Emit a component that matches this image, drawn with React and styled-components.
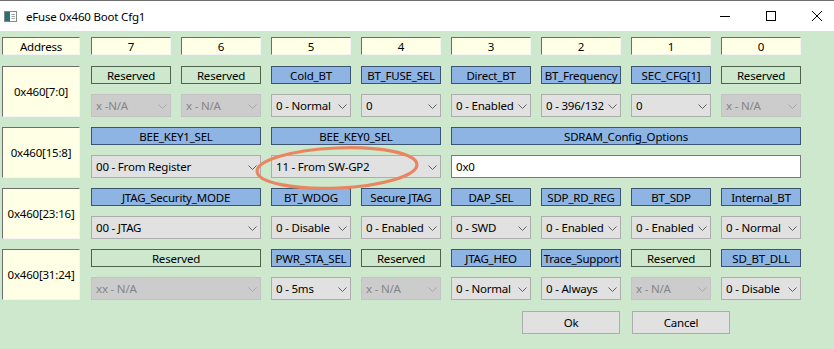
import React from 'react';
import styled, { createGlobalStyle } from 'styled-components';

const GlobalStyle = createGlobalStyle`
  html, body { margin: 0; padding: 0; }
  body {
    background: #cde8cc;
    font-family: "Noto Sans", "Segoe UI", sans-serif;
    font-size: 11.5px;
    letter-spacing: -0.2px;
    color: #000;
  }
`;

const Window = styled.div`
  position: relative;
  width: 834px;
  height: 349px;
  overflow: hidden;
  background: #cde8cc;
  display: flex;
  flex-direction: column;
`;

const TitleBar = styled.div`
  height: 30px;
  flex: none;
  background: #fff;
  border-top: 1px solid #6f6f6f;
  display: flex;
  align-items: center;
  padding-left: 4px;
`;

const AppIcon = styled.svg`
  width: 13px;
  height: 11px;
  flex: none;
  margin-right: 9px;
`;

const Title = styled.span`
  font-size: 11.5px;
  color: #000;
`;

const Controls = styled.div`
  margin-left: auto;
  margin-right: -6px;
  display: flex;
  height: 100%;
`;

const CaptionButton = styled.div`
  width: 46px;
  height: 100%;
  display: flex;
  align-items: center;
  justify-content: center;
`;

const Body = styled.div`
  padding: 6px 0 0 2px;
  display: flex;
  flex-direction: column;
`;

const Grid = styled.div`
  display: grid;
  grid-template-columns: 79px repeat(8, 80px);
  grid-template-rows: 19px repeat(4, 18px 23px);
  column-gap: 10px;
  row-gap: 10px;
`;

const Sunken = styled.div`
  grid-row: ${p => p.$row} / span ${p => p.$rspan || 1};
  grid-column: ${p => p.$col};
  box-sizing: border-box;
  width: ${p => (p.$col === 1 ? '78px' : 'auto')};
  height: ${p => (p.$rspan ? 'auto' : '18px')};
  background: #ffffe6;
  border-top: 1px solid #6d6d6d;
  border-left: 1px solid #6d6d6d;
  border-right: 1px solid #f4f4f4;
  border-bottom: 1px solid #f4f4f4;
  display: flex;
  align-items: center;
  justify-content: center;
  white-space: nowrap;
`;

const FieldLabel = styled.div`
  grid-row: ${p => p.$row};
  grid-column: ${p => p.$col} / span ${p => p.$span};
  box-sizing: border-box;
  height: 18px;
  border: 1px solid ${p => (p.$reserved ? '#4e624e' : '#3b5471')};
  background: ${p => (p.$reserved ? 'transparent' : '#8db4e2')};
  display: flex;
  align-items: center;
  justify-content: center;
  overflow: hidden;
  white-space: nowrap;
`;

const Select = styled.div`
  grid-row: ${p => p.$row};
  grid-column: ${p => p.$col} / span ${p => p.$span};
  box-sizing: border-box;
  height: 23px;
  border: 1px solid ${p => (p.$disabled ? '#c3c3c3' : '#adadad')};
  background: ${p => (p.$disabled ? '#cccccc' : '#e1e1e1')};
  color: ${p => (p.$disabled ? '#858585' : '#000')};
  display: flex;
  align-items: center;
  padding: 0 3px 0 4px;
  gap: 4px;
`;

const SelectText = styled.span`
  flex: 1;
  overflow: hidden;
  white-space: nowrap;
`;

const Chevron = styled.svg`
  width: 9px;
  height: 5px;
  flex: none;
  margin-top: 1px;
`;

const TextInput = styled.div`
  grid-row: ${p => p.$row};
  grid-column: ${p => p.$col} / span ${p => p.$span};
  box-sizing: border-box;
  height: 23px;
  border: 1px solid #7a7a7a;
  background: #fff;
  display: flex;
  align-items: center;
  padding: 0 4px;
`;

const ButtonRow = styled.div`
  display: flex;
  justify-content: flex-end;
  gap: 12px;
  margin-top: 11px;
  padding-right: 104px;
`;

const Button = styled.div`
  width: 98px;
  height: 23px;
  box-sizing: border-box;
  border: 1px solid #adadad;
  background: #e1e1e1;
  display: flex;
  align-items: center;
  justify-content: center;
`;

const Annotation = styled.svg`
  position: absolute;
  left: 250px;
  top: 142px;
  width: 175px;
  height: 54px;
  pointer-events: none;
`;

const headers = ['Address', '7', '6', '5', '4', '3', '2', '1', '0'];

const groups = [
  {
    addr: '0x460[7:0]',
    fields: [
      { name: 'Reserved', reserved: true, value: 'x -N/A' },
      { name: 'Reserved', reserved: true, value: 'x - N/A' },
      { name: 'Cold_BT', value: '0 - Normal' },
      { name: 'BT_FUSE_SEL', value: '0' },
      { name: 'Direct_BT', value: '0 - Enabled' },
      { name: 'BT_Frequency', value: '0 - 396/132MHz' },
      { name: 'SEC_CFG[1]', value: '0' },
      { name: 'Reserved', reserved: true, value: 'x - N/A' },
    ],
  },
  {
    addr: '0x460[15:8]',
    fields: [
      { name: 'BEE_KEY1_SEL', span: 2, value: '00 - From Register' },
      { name: 'BEE_KEY0_SEL', span: 2, value: '11 - From SW-GP2' },
      { name: 'SDRAM_Config_Options', span: 4, value: '0x0', input: true },
    ],
  },
  {
    addr: '0x460[23:16]',
    fields: [
      { name: 'JTAG_Security_MODE', span: 2, value: '00 - JTAG' },
      { name: 'BT_WDOG', value: '0 - Disable' },
      { name: 'Secure JTAG', value: '0 - Enabled' },
      { name: 'DAP_SEL', value: '0 - SWD' },
      { name: 'SDP_RD_REG', value: '0 - Enabled' },
      { name: 'BT_SDP', value: '0 - Enabled' },
      { name: 'Internal_BT', value: '0 - Normal' },
    ],
  },
  {
    addr: '0x460[31:24]',
    fields: [
      { name: 'Reserved', reserved: true, span: 2, value: 'xx - N/A' },
      { name: 'PWR_STA_SEL', value: '0 - 5ms' },
      { name: 'Reserved', reserved: true, value: 'x - N/A' },
      { name: 'JTAG_HEO', value: '0 - Normal' },
      { name: 'Trace_Support', value: '0 - Always' },
      { name: 'Reserved', reserved: true, value: 'x - N/A' },
      { name: 'SD_BT_DLL', value: '0 - Disable' },
    ],
  },
];

function ChevronIcon({ disabled }) {
  return (
    <Chevron viewBox="0 0 9 5">
      <polyline
        points="0.5,0.5 4.5,4.5 8.5,0.5"
        fill="none"
        stroke={disabled ? '#a8a8a8' : '#606060'}
        strokeWidth="1"
      />
    </Chevron>
  );
}

function renderGroup(group, gi) {
  const labelRow = 2 + gi * 2;
  const ctrlRow = labelRow + 1;
  const cells = [
    <Sunken key="addr" $row={labelRow} $rspan={2} $col={1}>
      {group.addr}
    </Sunken>,
  ];
  let col = 2;
  group.fields.forEach((f, i) => {
    const span = f.span || 1;
    cells.push(
      <FieldLabel key={`l${i}`} $row={labelRow} $col={col} $span={span} $reserved={f.reserved}>
        {f.name}
      </FieldLabel>
    );
    if (f.input) {
      cells.push(
        <TextInput key={`c${i}`} $row={ctrlRow} $col={col} $span={span}>
          {f.value}
        </TextInput>
      );
    } else {
      cells.push(
        <Select key={`c${i}`} $row={ctrlRow} $col={col} $span={span} $disabled={f.reserved}>
          <SelectText>{f.value}</SelectText>
          <ChevronIcon disabled={f.reserved} />
        </Select>
      );
    }
    col += span;
  });
  return cells;
}

export default function App() {
  return (
    <>
      <GlobalStyle />
      <Window>
        <TitleBar>
          <AppIcon viewBox="0 0 13 11">
            <rect x="0.5" y="0.5" width="12" height="10" fill="#ffffff" stroke="#7b8a8c" />
            <rect x="1" y="1" width="5" height="9" fill="#2f6f73" />
            <line x1="7.5" y1="3.5" x2="11" y2="3.5" stroke="#9aa5a6" />
            <line x1="7.5" y1="5.5" x2="11" y2="5.5" stroke="#9aa5a6" />
            <line x1="7.5" y1="7.5" x2="11" y2="7.5" stroke="#9aa5a6" />
          </AppIcon>
          <Title>eFuse 0x460 Boot Cfg1</Title>
          <Controls>
            <CaptionButton>
              <svg width="10" height="10" viewBox="0 0 10 10">
                <line x1="0" y1="5.5" x2="10" y2="5.5" stroke="#000" strokeWidth="1" />
              </svg>
            </CaptionButton>
            <CaptionButton>
              <svg width="10" height="10" viewBox="0 0 10 10">
                <rect x="0.5" y="0.5" width="9" height="9" fill="none" stroke="#000" strokeWidth="1" />
              </svg>
            </CaptionButton>
            <CaptionButton>
              <svg width="10" height="10" viewBox="0 0 10 10">
                <line x1="0" y1="0" x2="10" y2="10" stroke="#000" strokeWidth="1" />
                <line x1="10" y1="0" x2="0" y2="10" stroke="#000" strokeWidth="1" />
              </svg>
            </CaptionButton>
          </Controls>
        </TitleBar>
        <Body>
          <Grid>
            {headers.map((h, i) => (
              <Sunken key={h} $row={1} $col={i + 1}>
                {h}
              </Sunken>
            ))}
            {groups.map((g, gi) => renderGroup(g, gi))}
          </Grid>
          <ButtonRow>
            <Button>Ok</Button>
            <Button>Cancel</Button>
          </ButtonRow>
        </Body>
        <Annotation viewBox="0 0 175 54">
          <ellipse
            cx="87"
            cy="26"
            rx="80"
            ry="20"
            transform="rotate(-2.5 87 26)"
            fill="none"
            stroke="#ea8561"
            strokeWidth="3.2"
          />
        </Annotation>
      </Window>
    </>
  );
}
